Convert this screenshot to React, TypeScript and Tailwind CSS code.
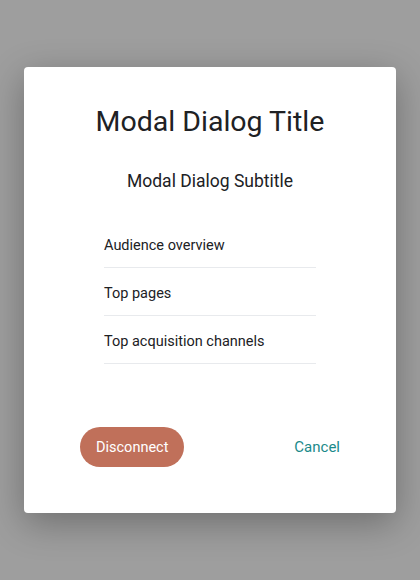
import React from "react";

export default function App() {
  const items = ["Audience overview", "Top pages", "Top acquisition channels"];
  return (
    <div
      className="w-[420px] h-[580px] bg-[#9e9e9e] pt-[67px] px-6"
      style={{ fontFamily: "Roboto, 'Open Sans', sans-serif" }}
    >
      <div className="w-[372px] h-[446px] bg-white rounded-[4px] shadow-[0_10px_36px_rgba(0,0,0,0.3)] flex flex-col items-center pt-[37px]">
        <h1 className="text-[28.5px] leading-[36px] text-[#202124] font-normal">Modal Dialog Title</h1>
        <h2 className="mt-[29px] text-[17.5px] leading-[24px] text-[#202124]">Modal Dialog Subtitle</h2>
        <ul className="mt-[27px] w-[212px]">
          {items.map((t) => (
            <li key={t} className="h-[48px] pt-[4px] flex items-center border-b border-[#e8eaed] text-[14.5px] text-[#202124]">
              {t}
            </li>
          ))}
        </ul>
        <div className="mt-[63px] w-full px-[56px] flex items-center justify-between">
          <button className="h-[40px] px-4 rounded-full bg-[#c0705a] text-white text-[14.5px] pt-[1px]">Disconnect</button>
          <button className="text-[15px] text-[#1a8a8a] pt-[1px]">Cancel</button>
        </div>
      </div>
    </div>
  );
}
